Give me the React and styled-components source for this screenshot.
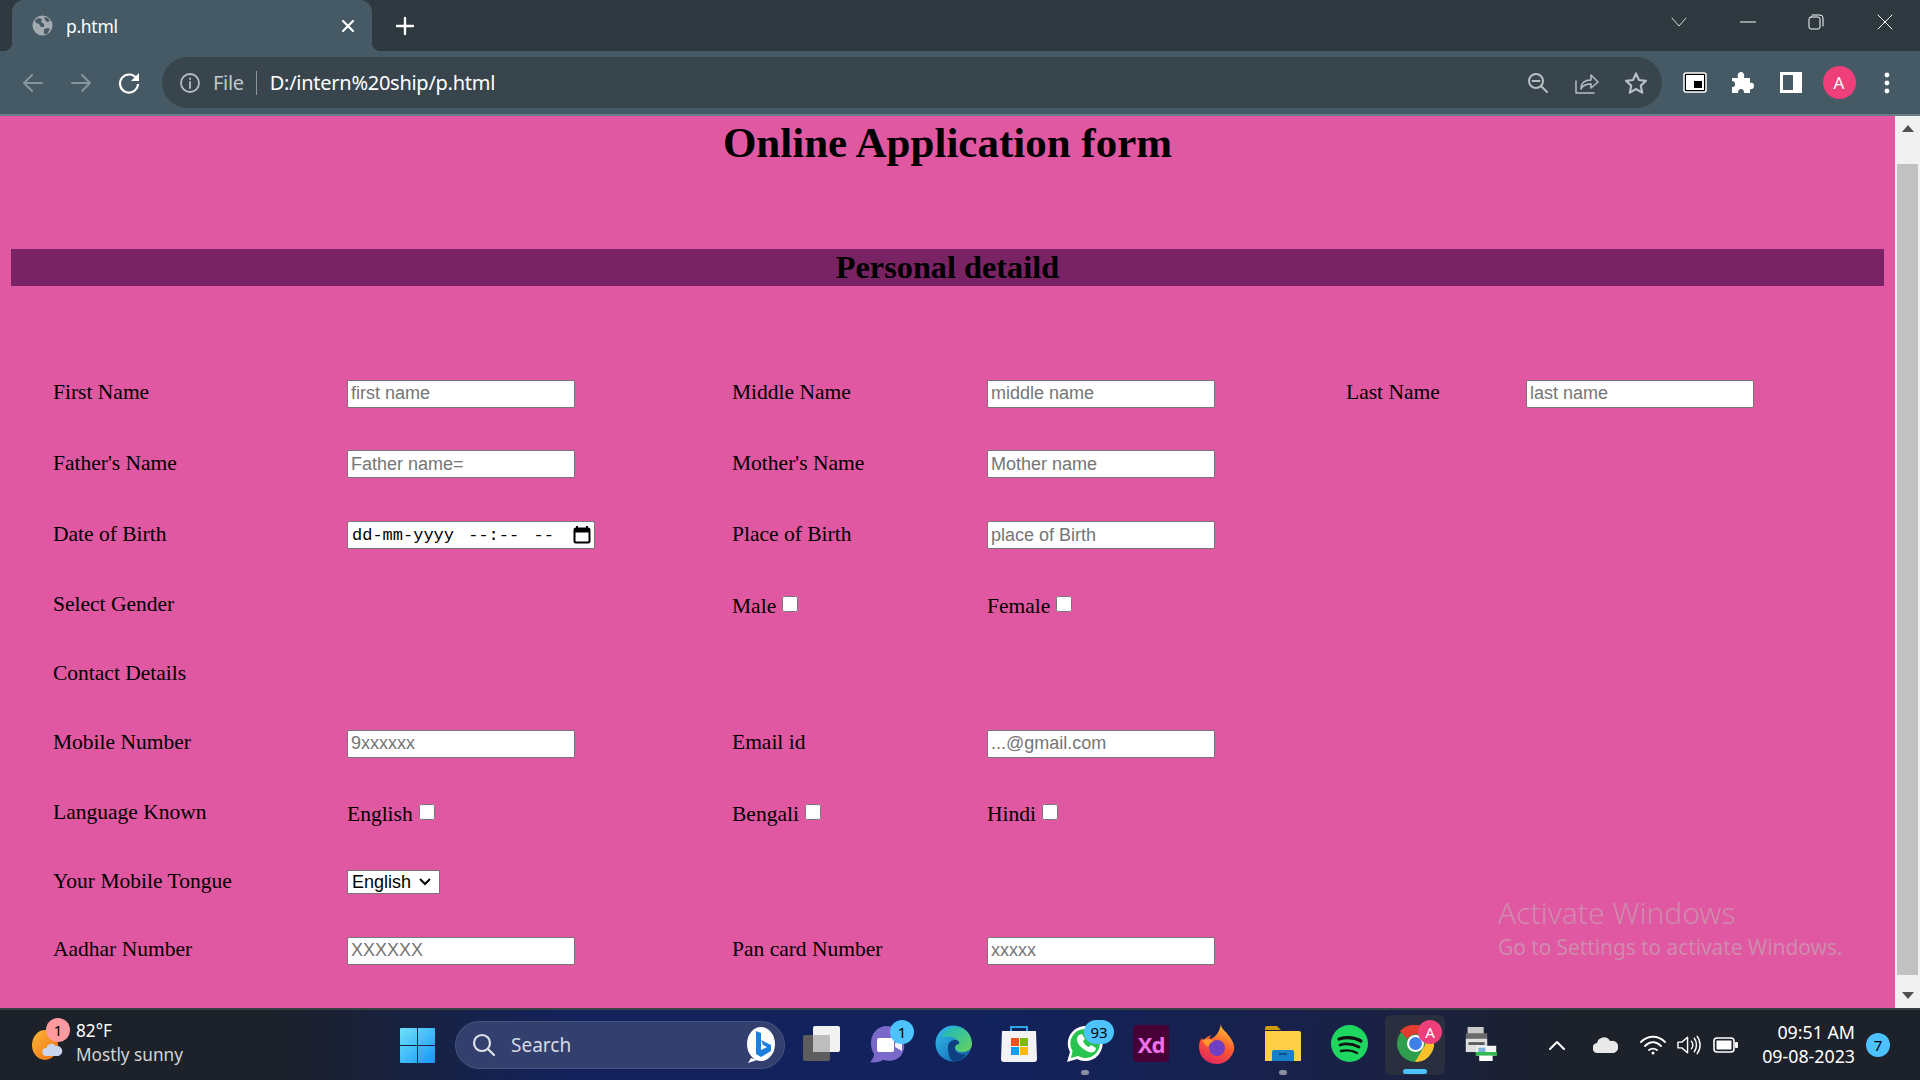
import React from "react";
import styled, { createGlobalStyle } from "styled-components";

const Global = createGlobalStyle`
  html, body { margin: 0; padding: 0; background: #2e383f; }
  * { box-sizing: border-box; }
`;

const Screen = styled.div`
  width: 1920px; height: 1080px; overflow: hidden; display: flex; flex-direction: column;
  font-family: "Liberation Serif", serif; position: relative;
`;

/* ---------- browser chrome ---------- */
const TabStrip = styled.div`
  height: 51px; background: #2e383f; display: flex; align-items: stretch; padding-left: 12px; flex: none;
`;
const Tab = styled.div`
  width: 360px; background: #465a65; border-radius: 12px 12px 0 0; display: flex; align-items: center;
  padding: 0 17px 0 20px; color: #fff; font: 17.5px "Noto Sans", sans-serif; position: relative;
  &::before, &::after { content: ""; position: absolute; bottom: 0; width: 9px; height: 9px; }
  &::before { left: -9px; background: radial-gradient(circle at 0 0, #2e383f 9px, #465a65 9.5px); }
  &::after { right: -9px; background: radial-gradient(circle at 100% 0, #2e383f 9px, #465a65 9.5px); }
`;
const TabTitle = styled.span` margin-left: 13px; flex: 1; letter-spacing: -0.3px; `;
const NewTab = styled.div` width: 66px; display: flex; align-items: center; justify-content: center; `;
const StripSpacer = styled.div` flex: 1; `;
const WinControls = styled.div` display: flex; align-items: center; padding-right: 1px; `;
const WinButton = styled.div` width: 68.5px; display: flex; justify-content: center; padding-bottom: 8px; `;

const Toolbar = styled.div`
  height: 65px; flex: none; background: #465a65; border-bottom: 2px solid #6a7c87; display: flex; align-items: center;
  padding: 0 0 0 9px;
`;
const NavButton = styled.div` width: 48px; height: 40px; display: flex; align-items: center; justify-content: center; flex: none; `;
const Omnibox = styled.div`
  width: 1500px; height: 51px; margin-left: 9px; background: #39454d; border-radius: 26px; display: flex; align-items: center;
  padding: 0 2px 0 17px; font: 20px "Noto Sans", sans-serif; flex: none;
`;
const FileLabel = styled.span` color: #c1c8cc; margin-left: 12px; letter-spacing: -0.3px; `;
const Divider = styled.span` width: 1px; height: 24px; background: #8b969c; margin: 0 14px 0 12px; `;
const Url = styled.span` color: #fff; flex: 1; letter-spacing: -0.27px; margin-left: -1px; `;
const OmniIcon = styled.div` width: 49px; display: flex; justify-content: center; `;
const ToolIcons = styled.div` display: flex; align-items: center; margin-left: 9px; `;
const ToolIcon = styled.div` width: 48px; display: flex; justify-content: center; align-items: center; `;
const Avatar = styled.div`
  width: 33px; height: 33px; border-radius: 50%; background: #ee3f7b; color: #fff; font: 17px "Noto Sans", sans-serif;
  display: flex; align-items: center; justify-content: center;
`;

/* ---------- page ---------- */
const Viewport = styled.div` flex: 1; display: flex; min-height: 0; position: relative; `;
const Page = styled.main` flex: 1; background: #e058a1; padding: 0 11px; min-width: 0; `;
const Title = styled.h1`
  margin: 0; padding-top: 4px; height: 133px; text-align: center; font-size: 43px; line-height: 46px; font-weight: 700; color: #000;
`;
const Band = styled.h2`
  margin: 0; height: 37px; background: #7a2364; text-align: center; font-size: 32.3px; line-height: 36px; font-weight: 700; color: #000;
`;
const Form = styled.form` padding: 71px 0 0 42px; font-size: 21.5px; color: #000; `;
const Row = styled.div`
  display: grid; grid-template-columns: 294px 385px 255px 359px 180px 1fr; align-items: center; height: ${p => p.$h}px;
`;
const Field = styled.input`
  width: 228.4px; height: 28px; margin-top: 2px; border: 1px solid #767676; border-radius: 2px; background: #fff; padding: 1px 3px;
  font: 18px "Liberation Sans", sans-serif; color: #000; display: block;
  &::placeholder { color: #757575; opacity: 1; }
`;
const DateField = styled.div`
  width: 248px; height: 28px; margin-top: 2px; border: 1px solid #767676; border-radius: 2px; background: #fff; display: flex; align-items: center;
  justify-content: space-between; padding: 0 3px 0 4px; font: 17px "Liberation Mono", monospace; color: #000;
  word-spacing: 4px; white-space: pre;
`;
const Check = styled.label` display: flex; align-items: center; padding-top: 3px; `;
const CheckBox = styled.input`
  width: 16px; height: 16px; margin: -5px 0 0 6px; accent-color: #fff;
`;
const Dropdown = styled.select`
  width: 93px; height: 24px; margin-top: 2px; padding: 0 0 0 4px; font: 18px "Liberation Sans", sans-serif; color: #000; display: block;
  border: 1px solid #767676; border-radius: 0; appearance: none;
  background: #fff url("data:image/svg+xml,%3Csvg xmlns='http://www.w3.org/2000/svg' width='12' height='8'%3E%3Cpath d='M1 1l5 5 5-5' fill='none' stroke='%23000' stroke-width='2'/%3E%3C/svg%3E") no-repeat right 8px center;
`;

const Scrollbar = styled.div`
  width: 25px; flex: none; background: #f1f1f1; display: flex; flex-direction: column; align-items: center;
`;
const ScrollEnd = styled.div` height: 25px; flex: none; display: flex; align-items: center; justify-content: center; `;
const ScrollThumb = styled.div` width: 21px; height: 811px; background: #c1c1c1; margin-top: 23px; margin-bottom: 8px; `;

const Watermark = styled.div`
  position: absolute; left: 1498px; top: 778px; color: rgba(190, 190, 190, 0.5); font-family: "Noto Sans", sans-serif; pointer-events: none;
`;
const WatermarkBig = styled.div` font-size: 30px; line-height: 38px; font-weight: 300; `;
const WatermarkSmall = styled.div` font-size: 21px; line-height: 30px; letter-spacing: -0.1px; `;

/* ---------- taskbar ---------- */
const Taskbar = styled.footer`
  height: 72px; flex: none; border-top: 2px solid #3b4045; display: flex; align-items: center; color: #fff;
  background: linear-gradient(90deg, #1c212a 0%, #1c212a 14%, #13225c 30%, #12225c 52%, #1a2144 72%, #1c212a 82%, #1c212a 100%);
  font-family: "Noto Sans", sans-serif;
`;
const Weather = styled.div` width: 382px; flex: none; display: flex; align-items: center; padding-left: 32px; position: relative; `;
const WeatherText = styled.div` margin: -5px 0 0 10px; font-size: 17.2px; line-height: 24px; `;
const WeatherSub = styled.div` color: #d4d6da; `;
const StartSlot = styled.div` width: 71px; display: flex; justify-content: center; flex: none; `;
const SearchPill = styled.div`
  width: 330px; height: 48px; margin-left: 2px; border-radius: 24px; background: #33406e; border: 1px solid #47537f; display: flex; align-items: center;
  padding: 0 7px 0 16px; flex: none; color: #d8dbe4; font-size: 19px;
`;
const SearchLabel = styled.span` margin-left: 15px; flex: 1; `;
const AppSlot = styled.div`
  width: 66px; height: 60px; padding-bottom: 3px; flex: none; display: flex; align-items: center; justify-content: center; position: relative;
`;
const ActiveBox = styled.div`
  position: absolute; top: 0; bottom: 0; left: 3px; right: 3px; border-radius: 6px; background: #2a2f40;
`;
const IconLayer = styled.div` position: relative; display: flex; `;
const AppRow = styled.div` display: flex; align-items: center; margin-left: 3px; `;
const Badge = styled.div`
  position: absolute; top: ${p => p.$top ?? 5}px; left: ${p => p.$left}px; min-width: ${p => p.$w ?? 24}px; height: 24px; padding: 0 2px; border-radius: 12px;
  background: ${p => p.$bg || "#4cc2ff"}; color: ${p => p.$fg || "#000"}; font-size: 15px; line-height: 24px; text-align: center;
`;
const RunDot = styled.div`
  position: absolute; bottom: ${p => p.$active ? 1 : 0}px; left: 50%; transform: translateX(-50%); height: 5px; border-radius: 3px;
  width: ${p => (p.$active ? 24 : 8)}px; background: ${p => (p.$active ? "#4cc2ff" : "#8b90a0")};
`;
const Tray = styled.div` display: flex; align-items: center; margin-left: 19px; flex: 1; `;
const TrayIcon = styled.div` width: ${p => p.$w || 48}px; display: flex; justify-content: center; flex: none; `;
const Clock = styled.div` width: 106px; margin-top: -3px; text-align: right; font-size: 17.8px; line-height: 24px; `;
const Notif = styled.div`
  width: 24px; height: 24px; border-radius: 50%; background: #4cc2ff; color: #000; font-size: 15px; line-height: 24px; text-align: center; margin-left: 11px;
`;
const XdGlyph = styled.div`
  width: 36px; height: 37px; border-radius: 4px; background: #470137; color: #f070e8; font: 700 22px "Noto Sans", sans-serif;
  display: flex; align-items: center; justify-content: center; letter-spacing: -1px;
`;

/* ---------- icons ---------- */
const Stroke = ({ w = 20, h = 20, c = "#fff", sw = 2, vb, children }) => (
  <svg width={w} height={h} viewBox={vb || `0 0 ${w} ${h}`} fill="none" stroke={c} strokeWidth={sw} strokeLinecap="round" strokeLinejoin="round">{children}</svg>
);
const Globe = () => (
  <svg width="21" height="21" viewBox="0 0 21 21">
    <circle cx="10.5" cy="10.5" r="10" fill="#a3abb1" />
    <path d="M3 5l4-2 3 1-1 3 3 2 0 3-3 0-2-3-3-1zM12 2l4 1 2 3-3 1-2-2zM12 14l4-1 2 1-3 5-3 0z" fill="#465a65" />
  </svg>
);
const Info = () => <Stroke w={22} h={22} c="#b6bec3" sw={1.8}><circle cx="11" cy="11" r="9" /><path d="M11 10v6M11 6.5v.6" /></Stroke>;
const Windows = () => (
  <svg width="35" height="35" viewBox="0 0 35 35">
    <defs><linearGradient id="wg" x1="0" y1="0" x2="1" y2="1"><stop offset="0" stopColor="#6fe0fb" /><stop offset="1" stopColor="#1597f5" /></linearGradient></defs>
    <path fill="url(#wg)" d="M1 0h16v17H0V1a1 1 0 011-1zM18 0h16a1 1 0 011 1v16H18zM0 18h17v17H1a1 1 0 01-1-1zM18 18h17v16a1 1 0 01-1 1H18z" />
  </svg>
);
const Bing = () => (
  <svg width="32" height="40" viewBox="0 0 32 40">
    <ellipse cx="16" cy="19" rx="14" ry="17" fill="#fff" />
    <path d="M6 33l-3 5 9-3z" fill="#fff" />
    <path d="M11 6l5 2v17l6-3-4-2-2-5 10 5v6l-10 6-5-3z" fill="#1b7fe0" />
  </svg>
);
const TaskView = () => (
  <svg width="37" height="35" viewBox="0 0 37 35">
    <rect x="10" y="0" width="27" height="26" rx="2" fill="#f2f2f2" />
    <rect x="0" y="9" width="27" height="26" rx="2" fill="#5d5d5d" />
    <rect x="10" y="9" width="17" height="17" fill="#bdbdbd" />
  </svg>
);
const Meet = () => (
  <svg width="36" height="42" viewBox="0 0 36 42">
    <path d="M18 3C8 3 2 11 2 20c0 5 1 8 3 11 0 3-2 6-4 8 5 1 10 0 13-2 8 2 16 0 19-6 3-5 3-12 0-18C30 7 24 3 18 3z" fill="#7b69c9" />
    <rect x="8" y="15" width="17" height="14" rx="2" fill="#fff" />
    <path d="M26 20l7-4v12l-7-4z" fill="#fff" opacity=".9" />
  </svg>
);
const Edge = () => (
  <svg width="37" height="37" viewBox="0 0 37 37">
    <defs>
      <linearGradient id="e1" x1="0" y1="0" x2="1" y2="1"><stop offset="0" stopColor="#35c1f1" /><stop offset="1" stopColor="#0c59a4" /></linearGradient>
      <linearGradient id="e2" x1="0" y1="0" x2="1" y2="1"><stop offset="0" stopColor="#1db7c4" /><stop offset="1" stopColor="#66d35a" /></linearGradient>
    </defs>
    <circle cx="18.5" cy="18.5" r="18" fill="url(#e1)" />
    <path d="M7 13C9 4 17 1 23 2c8 1 14 8 14 17 0 6-5 8-10 8-4 0-7-2-7-5 0-1 1-2 2-3 1-3-1-6-5-7-4-1-8 0-10 1z" fill="url(#e2)" />
    <path d="M13 22c0-4 3-7 7-7 3 0 5 2 4 4-2 0-4 1-4 4 0 5 6 7 11 6-3 5-8 8-13 7-4-2-5-9-5-14z" fill="#0e3f80" />
  </svg>
);
const Store = () => (
  <svg width="36" height="38" viewBox="0 0 36 38">
    <path d="M10 7V2h16v5" fill="none" stroke="#2aa7e8" strokeWidth="2" />
    <path d="M1 6h34l1 28a3 3 0 01-3 3H3a3 3 0 01-3-3z" fill="#f3f3f3" />
    <rect x="10" y="13" width="8" height="8" fill="#f25022" /><rect x="19" y="13" width="8" height="8" fill="#7fba00" />
    <rect x="10" y="22" width="8" height="8" fill="#00a4ef" /><rect x="19" y="22" width="8" height="8" fill="#ffb900" />
  </svg>
);
const WhatsApp = () => (
  <svg width="38" height="38" viewBox="0 0 38 38">
    <path d="M19 1a17.500 17.500 0 00-15 26L1 37l10-3A17.500 17.500 0 1019 1z" fill="#fff" />
    <path d="M19 4a14.500 14.500 0 00-12.500 22L5 33l7-2A14.500 14.500 0 1019 4z" fill="#29c44f" />
    <path d="M13 10l3-1 3 5-2 2c1 3 3 5 6 6l2-2 5 3-1 3c-2 2-6 2-10-1-5-3-8-7-8-11 0-2 1-3 2-4z" fill="#fff" />
  </svg>
);
const Firefox = () => (
  <svg width="36" height="40" viewBox="0 0 36 40">
    <defs><linearGradient id="ff" x1="0.7" y1="0" x2="0.3" y2="1"><stop offset="0" stopColor="#ffc62e" /><stop offset=".5" stopColor="#ff5a30" /><stop offset="1" stopColor="#e0265e" /></linearGradient></defs>
    <path d="M22 0c0 5 4 6 8 12 4 5 6 10 5 14-2 8-9 14-17 14C8 40 0 33 0 23c0-4 1-7 3-9l1 3c2-3 5-5 9-6-2 1-3 3-2 4 4-1 9-5 11-15z" fill="url(#ff)" />
    <circle cx="18" cy="24" r="8" fill="#6f3fc4" />
    <path d="M3 16c4-2 8-1 12 1-3 1-5 3-6 6-2-1-4-4-6-7z" fill="#ff9a2a" />
  </svg>
);
const Folder = () => (
  <svg width="36" height="35" viewBox="0 0 36 35">
    <path d="M0 2a2 2 0 012-2h10l4 4h-16z" fill="#d19b0e" />
    <path d="M0 5h34a2 2 0 012 2v28H0z" fill="#ffcf4a" />
    <path d="M7 35v-9a2 2 0 012-2h18a2 2 0 012 2v9z" fill="#1681c8" />
    <rect x="14" y="27" width="8" height="2" fill="#0c4f86" />
  </svg>
);
const Spotify = () => (
  <svg width="37" height="37" viewBox="0 0 37 37">
    <circle cx="18.500" cy="18.500" r="18.500" fill="#1ed760" />
    <g fill="none" stroke="#111" strokeLinecap="round">
      <path d="M8 14c7-2 15-2 22 2" strokeWidth="3.2" />
      <path d="M9 20c6-2 13-1 19 2" strokeWidth="2.800" />
      <path d="M10 26c5-1 11-1 16 2" strokeWidth="2.400" />
    </g>
  </svg>
);
const Chrome = () => (
  <svg width="37" height="37" viewBox="0 0 37 37">
    <circle cx="18.500" cy="18.500" r="18.500" fill="#2f9e4f" />
    <path d="M18.500 0a18.500 18.500 0 0116 9.250H18.500a9 9 0 00-8 5L3 6A18.500 18.500 0 0118.500 0z" fill="#e33b2e" />
    <path d="M34.500 9.250A18.500 18.500 0 0118 37l8-13.500a9 9 0 00-.5-13z" fill="#fbc02d" />
    <circle cx="18.500" cy="18.500" r="8.500" fill="#fff" /><circle cx="18.500" cy="18.500" r="6.500" fill="#3f7fe8" />
  </svg>
);
const Printer = () => (
  <svg width="34" height="36" viewBox="0 0 38 38">
    <rect x="4" y="0" width="18" height="8" fill="#c9c9c9" /><rect x="2" y="7" width="24" height="6" fill="#6a6a6a" />
    <rect x="2" y="13" width="24" height="15" fill="#dedede" /><rect x="5" y="17" width="18" height="3" fill="#555" />
    <rect x="14" y="21" width="22" height="11" fill="#f5f5f5" /><rect x="16" y="23" width="8" height="5" fill="#7fb2dc" />
    <path d="M13 28h24v4H13z" fill="#2dbb4e" /><rect x="17" y="32" width="15" height="6" fill="#fff" />
  </svg>
);
const Sun = () => (
  <svg width="34" height="32" viewBox="0 0 34 32">
    <defs><linearGradient id="sg" x1="0" y1="0" x2="1" y2="1"><stop offset="0" stopColor="#fbb83a" /><stop offset="1" stopColor="#ef6c10" /></linearGradient></defs>
    <ellipse cx="13" cy="16" rx="13" ry="15" fill="url(#sg)" />
    <path d="M14 27a4 4 0 01.5-8 5 5 0 019-2 4.500 4.500 0 013 10z" fill="#c9d5ec" />
  </svg>
);

const rows = [
  { h: 71, cells: [["l", "First Name"], ["i", "first name"], ["l", "Middle Name"], ["i", "middle name"], ["l", "Last Name"], ["i", "last name"]] },
  { h: 70, cells: [["l", "Father's Name"], ["i", "Father name="], ["l", "Mother's Name"], ["i", "Mother name"]] },
  { h: 72, cells: [["l", "Date of Birth"], ["d"], ["l", "Place of Birth"], ["i", "place of Birth"]] },
  { h: 69, cells: [["l", "Select Gender"], ["e"], ["c", "Male"], ["c", "Female"]] },
  { h: 68, cells: [["l", "Contact Details"]] },
  { h: 71, cells: [["l", "Mobile Number"], ["i", "9xxxxxx"], ["l", "Email id"], ["i", "...@gmail.com"]] },
  { h: 69, cells: [["l", "Language Known"], ["c", "English"], ["c", "Bengali"], ["c", "Hindi"]] },
  { h: 68, cells: [["l", "Your Mobile Tongue"], ["s"]] },
  { h: 69, cells: [["l", "Aadhar Number"], ["i", "XXXXXX"], ["l", "Pan card Number"], ["i", "xxxxx"]] },
];

const Cell = ({ kind, text }) => {
  if (kind === "l") return <span>{text}</span>;
  if (kind === "i") return <Field type="text" placeholder={text} />;
  if (kind === "c") return <Check>{text}<CheckBox type="checkbox" /></Check>;
  if (kind === "s") return <Dropdown defaultValue="English"><option>English</option><option>Bengali</option><option>Hindi</option></Dropdown>;
  if (kind === "d") return (
    <DateField>
      <span>dd-mm-yyyy --:-- --</span>
      <svg width="18" height="18" viewBox="0 0 18 18"><path d="M4 0v2M14 0v2" stroke="#000" strokeWidth="2" /><rect x="1.500" y="2.500" width="15" height="14" rx="1.500" fill="none" stroke="#000" strokeWidth="2" /><rect x="2" y="3" width="14" height="3.500" fill="#000" /></svg>
    </DateField>
  );
  return <span />;
};

export default function App() {
  return (
    <Screen>
      <Global />
      <TabStrip>
        <Tab>
          <Globe />
          <TabTitle>p.html</TabTitle>
          <Stroke w={14} h={14} sw={2.2}><path d="M2 2l10 10M12 2L2 12" /></Stroke>
        </Tab>
        <NewTab><Stroke w={20} h={20} sw={2.4}><path d="M10 2v16M2 10h16" /></Stroke></NewTab>
        <StripSpacer />
        <WinControls>
          <WinButton><Stroke w={16} h={10} c="#d6dadc" sw={1}><path d="M1 1l7 8 7-8" /></Stroke></WinButton>
          <WinButton><Stroke w={16} h={10} c="#fff" sw={1}><path d="M0.500 5h15" /></Stroke></WinButton>
          <WinButton><Stroke w={16} h={16} c="#fff" sw={1}><rect x="1" y="3" width="11" height="12" rx="2" /><path d="M4 1h8a3 3 0 013 3v8" /></Stroke></WinButton>
          <WinButton><Stroke w={16} h={16} c="#fff" sw={1}><path d="M1 1l14 14M15 1L1 15" /></Stroke></WinButton>
        </WinControls>
      </TabStrip>
      <Toolbar>
        <NavButton><Stroke w={22} h={20} c="#87959d"><path d="M20 10H3M10 2l-8 8 8 8" /></Stroke></NavButton>
        <NavButton><Stroke w={22} h={20} c="#87959d"><path d="M2 10h17M12 2l8 8-8 8" /></Stroke></NavButton>
        <NavButton>
          <svg width="22" height="22" viewBox="0 0 22 22" fill="none"><path d="M18.500 6.500A9 9 0 1020 12" stroke="#fff" strokeWidth="2.200" /><path d="M21 1v8h-8z" fill="#fff" /></svg>
        </NavButton>
        <Omnibox>
          <Info />
          <FileLabel>File</FileLabel>
          <Divider />
          <Url>D:/intern%20ship/p.html</Url>
          <OmniIcon><Stroke w={22} h={22} c="#b6bec3" sw={2}><circle cx="9" cy="9" r="7" /><path d="M5.500 9h7M14 14l6 6" /></Stroke></OmniIcon>
          <OmniIcon><Stroke w={24} h={22} c="#b6bec3" sw={1.5}><path d="M1 9v12h18M6 17c0-7 5-9 10-9V3l7 7-7 6v-4c-4 0-8 1-10 5z" /></Stroke></OmniIcon>
          <OmniIcon><Stroke w={24} h={24} c="#b6bec3" sw={2.2}><path d="M12 2.500l3 6.500 7 .8-5.200 4.800 1.400 7L12 18l-6.200 3.600 1.400-7L2 9.800l7-.8z" /></Stroke></OmniIcon>
        </Omnibox>
        <ToolIcons>
          <ToolIcon>
            <svg width="24" height="21" viewBox="0 0 24 21"><rect x="1" y="1" width="22" height="19" rx="2" fill="#000" stroke="#fff" strokeWidth="1.500" /><rect x="3" y="3" width="18" height="15" fill="#fff" /><rect x="11" y="9" width="8" height="7" fill="#000" /></svg>
          </ToolIcon>
          <ToolIcon>
            <svg width="22" height="22" viewBox="0 0 22 22"><path d="M0 6h6c-1-4 1-6 3-6s4 2 3 6h6v5c3-1 4 1 4 3s-2 4-4 3v4h-6c0-3-1-4-3-4s-3 1-3 4H0v-6c3 0 3-1 3-3s-1-3-3-3z" fill="#fff" /></svg>
          </ToolIcon>
          <ToolIcon>
            <svg width="22" height="21" viewBox="0 0 22 21"><path d="M0 0h22v21H0z" fill="#fff" /><path d="M3 3h10v15H3z" fill="#465a65" /></svg>
          </ToolIcon>
          <ToolIcon><Avatar>A</Avatar></ToolIcon>
          <ToolIcon>
            <svg width="6" height="22" viewBox="0 0 6 22" fill="#fff"><circle cx="3" cy="3" r="2.400" /><circle cx="3" cy="11" r="2.400" /><circle cx="3" cy="19" r="2.400" /></svg>
          </ToolIcon>
        </ToolIcons>
      </Toolbar>
      <Viewport>
        <Page>
          <Title>Online Application form</Title>
          <Band>Personal detaild</Band>
          <Form onSubmit={e => e.preventDefault()}>
            {rows.map((r, i) => (
              <Row key={i} $h={r.h}>
                {r.cells.map(([k, t], j) => <Cell key={j} kind={k} text={t} />)}
              </Row>
            ))}
          </Form>
        </Page>
        <Scrollbar>
          <ScrollEnd><svg width="12" height="7" viewBox="0 0 12 7"><path d="M6 0l6 7H0z" fill="#505050" /></svg></ScrollEnd>
          <ScrollThumb />
          <ScrollEnd><svg width="12" height="7" viewBox="0 0 12 7"><path d="M0 0h12L6 7z" fill="#505050" /></svg></ScrollEnd>
        </Scrollbar>
        <Watermark>
          <WatermarkBig>Activate Windows</WatermarkBig>
          <WatermarkSmall>Go to Settings to activate Windows.</WatermarkSmall>
        </Watermark>
      </Viewport>
      <Taskbar>
        <Weather>
          <Sun />
          <Badge $left={46} $top={-6} $bg="#ff9a9f">1</Badge>
          <WeatherText>
            <div>82°F</div>
            <WeatherSub>Mostly sunny</WeatherSub>
          </WeatherText>
        </Weather>
        <StartSlot><Windows /></StartSlot>
        <SearchPill>
          <Stroke w={24} h={24} c="#dfe2ea" sw={2.2}><circle cx="10" cy="10" r="8" /><path d="M16 16l6 6" /></Stroke>
          <SearchLabel>Search</SearchLabel>
          <Bing />
        </SearchPill>
        <AppRow>
          <AppSlot><TaskView /></AppSlot>
          <AppSlot><Meet /><Badge $left={36} $w={24}>1</Badge></AppSlot>
          <AppSlot><Edge /></AppSlot>
          <AppSlot><Store /></AppSlot>
          <AppSlot><WhatsApp /><Badge $left={32} $w={30}>93</Badge><RunDot /></AppSlot>
          <AppSlot><XdGlyph>Xd</XdGlyph></AppSlot>
          <AppSlot><Firefox /></AppSlot>
          <AppSlot><Folder /><RunDot /></AppSlot>
          <AppSlot><Spotify /></AppSlot>
          <AppSlot><ActiveBox /><IconLayer><Chrome /></IconLayer><Badge $left={36} $w={24} $bg="#ee3f7b" $fg="#fff" $top={5}>A</Badge><RunDot $active /></AppSlot>
          <AppSlot><Printer /></AppSlot>
        </AppRow>
        <Tray>
          <TrayIcon $w={48}><Stroke w={16} h={10} sw={2}><path d="M1 9l7-7 7 7" /></Stroke></TrayIcon>
          <TrayIcon $w={48}>
            <svg width="25" height="16" viewBox="0 0 25 16"><path d="M5 16a5 5 0 01-1-10 7 7 0 0113-2 5 5 0 014 12z" fill="#e9e9e9" /></svg>
          </TrayIcon>
          <TrayIcon $w={48}>
            <svg width="26" height="20" viewBox="0 0 26 20" fill="none" stroke="#fff" strokeWidth="1.800" strokeLinecap="round"><path d="M1 7c7-7 17-7 24 0M5 11c5-5 11-5 16 0M9 15c3-2 5-2 8 0" /><circle cx="13" cy="18" r="1.500" fill="#fff" stroke="none" /></svg>
          </TrayIcon>
          <TrayIcon $w={24}>
            <svg width="25" height="22" viewBox="0 0 25 22" fill="none" stroke="#fff" strokeWidth="1.500" strokeLinecap="round" strokeLinejoin="round"><path d="M1 8v6h4l6 5V3L5 8zM15 7c2 2 2 6 0 8M18 4c3 4 3 10 0 14M21 2c4 5 4 13 0 18" /></svg>
          </TrayIcon>
          <TrayIcon $w={48}>
            <svg width="25" height="16" viewBox="0 0 25 16"><rect x="1" y="1" width="20" height="14" rx="3" fill="none" stroke="#fff" strokeWidth="1.600" /><rect x="3.500" y="3.500" width="15" height="9" fill="#fff" /><rect x="22" y="5" width="3" height="6" rx="1" fill="#fff" /></svg>
          </TrayIcon>
          <Clock>09:51 AM<br />09-08-2023</Clock>
          <Notif>7</Notif>
        </Tray>
      </Taskbar>
    </Screen>
  );
}
